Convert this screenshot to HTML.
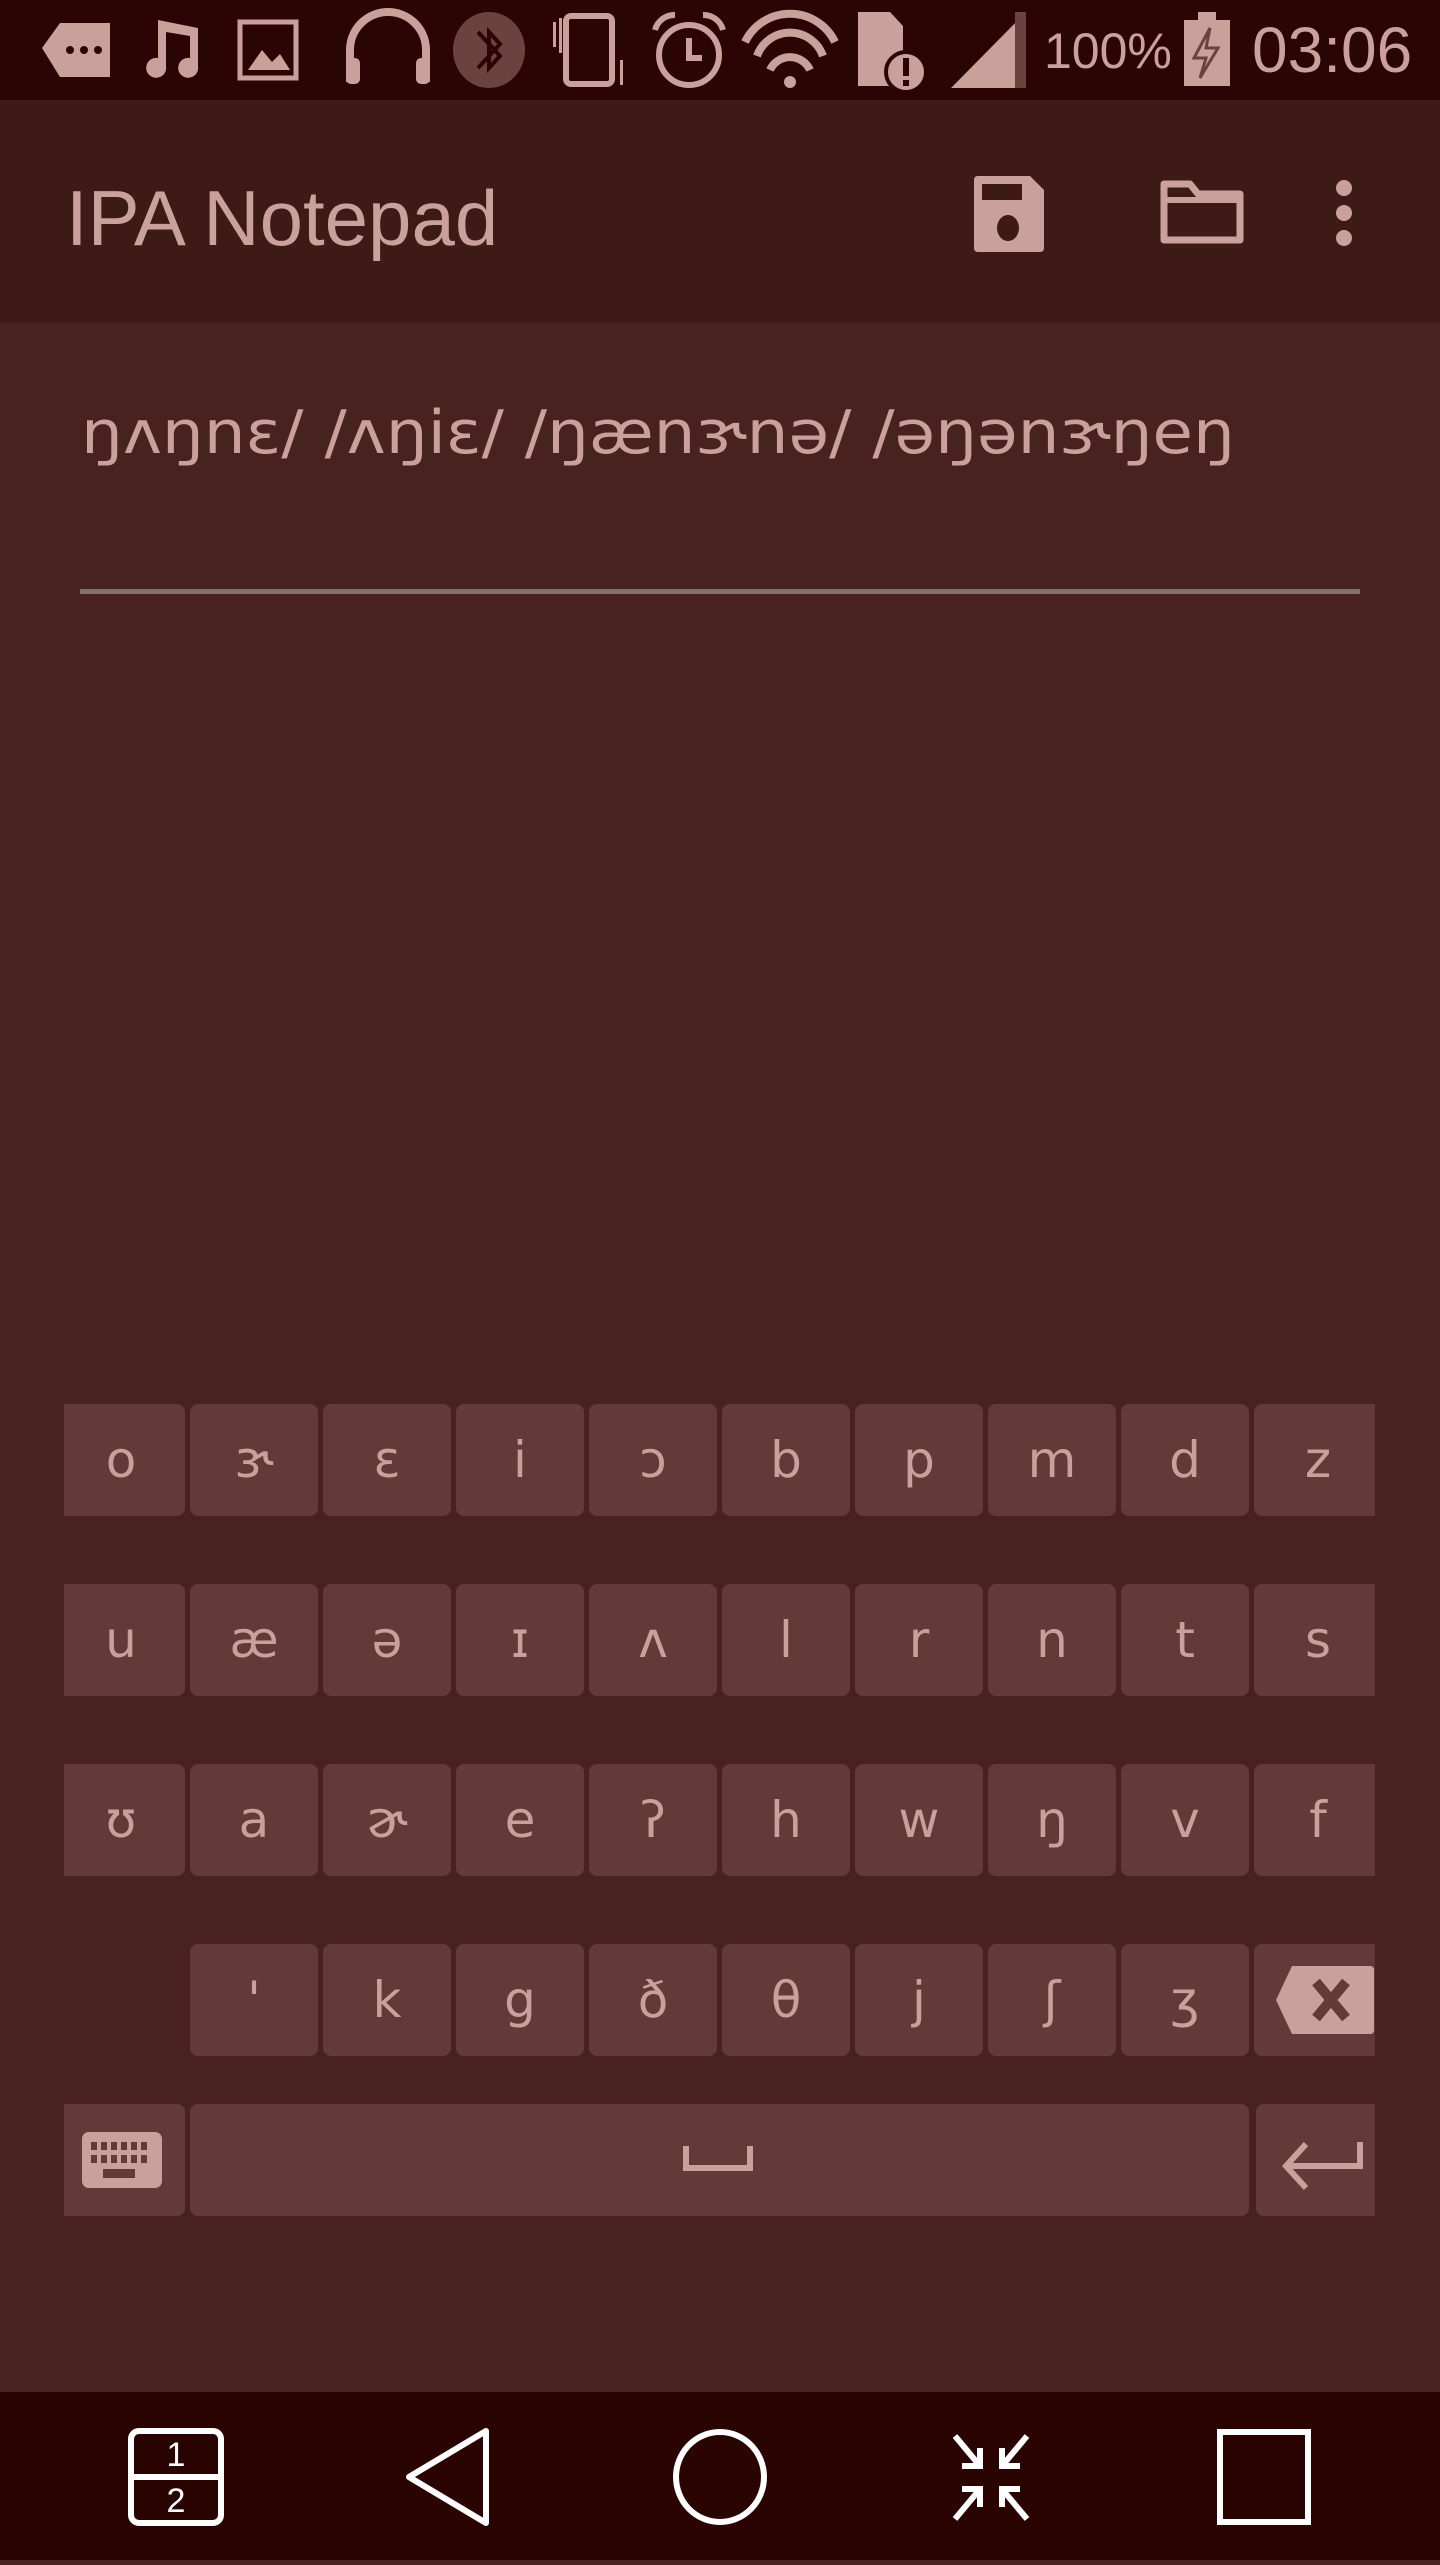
<!DOCTYPE html>
<html><head><meta charset="utf-8"><style>
*{margin:0;padding:0;box-sizing:border-box}
body{width:1440px;height:2560px;background:#48221e;font-family:"Liberation Sans","DejaVu Sans",sans-serif;position:relative;overflow:hidden;color:#c9a09a}
#sb{position:absolute;left:0;top:0;width:1440px;height:100px;background:#2a0503}
#ab{position:absolute;left:0;top:100px;width:1440px;height:223px;background:#3e1a16}
#title{position:absolute;left:66px;top:168px;font-size:78px;line-height:100px;color:#c9a09a}
#txt{position:absolute;left:81px;top:393px;font-size:60px;line-height:80px;white-space:nowrap;font-family:"DejaVu Sans","Liberation Sans",sans-serif;transform:scaleX(1.1);transform-origin:left}
#line{position:absolute;left:80px;top:589px;width:1280px;height:5px;background:#85706a}
#kb{position:absolute;left:64px;top:1404px;width:1311px;height:812px;overflow:hidden}
.k{position:absolute;width:128px;height:112px;background:#633a37;border-radius:8px;text-align:center;font-size:50px;line-height:112px;color:#c9a09a;font-family:"DejaVu Sans","Liberation Sans",sans-serif}
#nav{position:absolute;left:0;top:2392px;width:1440px;height:168px;background:#2a0400}
</style></head><body>
<div id="sb">
<svg width="1440" height="100" viewBox="0 0 1440 100" fill="#c9a09a">
<path d="M42 48 L60 23 L110 23 L110 77 L60 77 Z"/>
<circle cx="70" cy="50" r="4" fill="#2a0503"/><circle cx="84" cy="50" r="4" fill="#2a0503"/><circle cx="98" cy="50" r="4" fill="#2a0503"/>
<path d="M158 20 L198 28 L198 66 A10 10 0 1 1 190 58 L190 36 L166 32 L166 66 A10 10 0 1 1 158 58 Z"/>
<rect x="240" y="22" width="56" height="56" fill="none" stroke="#c9a09a" stroke-width="5"/>
<path d="M248 70 L262 50 L272 62 L280 54 L290 70 Z"/>
<path d="M350 82 L350 50 A38 38 0 0 1 426 50 L426 82" fill="none" stroke="#c9a09a" stroke-width="8"/>
<rect x="346" y="58" width="14" height="26" rx="5"/><rect x="416" y="58" width="14" height="26" rx="5"/>
<ellipse cx="489" cy="50" rx="36" ry="38" fill="#6b433e"/>
<path d="M478 32 L500 56 L489 68 L489 32 L500 44 L478 68" fill="none" stroke="#2a0503" stroke-width="4"/>
<rect x="566" y="16" width="46" height="68" rx="5" fill="none" stroke="#c9a09a" stroke-width="6"/>
<rect x="553" y="22" width="3" height="25"/><rect x="559" y="18" width="3" height="35"/><rect x="620" y="60" width="3" height="25"/>
<circle cx="689" cy="55" r="30" fill="none" stroke="#c9a09a" stroke-width="6"/>
<path d="M689 38 L689 58 L702 58" fill="none" stroke="#c9a09a" stroke-width="6"/>
<path d="M655 30 A20 20 0 0 1 675 15 M723 30 A20 20 0 0 0 703 15" fill="none" stroke="#c9a09a" stroke-width="6"/>
<path d="M745 42 A50 50 0 0 1 835 42" fill="none" stroke="#c9a09a" stroke-width="8"/>
<path d="M757 56 A35 35 0 0 1 823 56" fill="none" stroke="#c9a09a" stroke-width="8"/>
<path d="M770 70 A22 22 0 0 1 810 70" fill="none" stroke="#c9a09a" stroke-width="8"/>
<circle cx="790" cy="82" r="6"/>
<path d="M858 12 L890 12 L903 26 L903 86 L858 86 Z"/>
<circle cx="906" cy="72" r="20" fill="#c9a09a" stroke="#2a0503" stroke-width="4"/>
<rect x="903" y="58" width="6" height="18" fill="#2a0503"/><rect x="903" y="80" width="6" height="6" fill="#2a0503"/>
<path d="M951 88 L1026 12 L1026 88 Z"/>
<rect x="1015" y="12" width="11" height="76" fill="#6b433e"/>
<rect x="1184" y="20" width="46" height="66"/><rect x="1198" y="12" width="18" height="10"/>
<path d="M1210 28 L1194 58 L1206 58 L1200 78 L1218 48 L1206 48 Z" fill="none" stroke="#6b433e" stroke-width="3"/>
<text x="1044" y="68" font-size="50" font-family="Liberation Sans">100%</text>
<text x="1252" y="72" font-size="64" font-family="Liberation Sans">03:06</text>
</svg>
</div>
<div id="ab">
<svg style="position:absolute;left:0;top:0" width="1440" height="223" viewBox="0 100 1440 223" fill="#c9a09a">
<path d="M978 176 L1030 176 L1044 190 L1044 248 Q1044 252 1040 252 L978 252 Q974 252 974 248 L974 180 Q974 176 978 176 Z"/>
<rect x="982" y="184" width="40" height="16" fill="#3e1a16"/>
<ellipse cx="1008" cy="228" rx="11" ry="13" fill="#3e1a16"/>
<path d="M1164 184 L1190 184 L1198 194 L1240 194 L1240 240 L1164 240 Z" fill="none" stroke="#c9a09a" stroke-width="7" stroke-linejoin="round"/>
<path d="M1164 200 L1240 200" stroke="#c9a09a" stroke-width="6"/>
<circle cx="1344" cy="188" r="8"/><circle cx="1344" cy="213" r="8"/><circle cx="1344" cy="238" r="8"/>
</svg>
<div id="title" style="top:68px">IPA Notepad</div>
</div>
<div id="txt">ŋʌŋnɛ/ /ʌŋiɛ/ /ŋænɝnə/ /əŋənɝŋeŋ</div>
<div id="line"></div>
<div id="kb">
<div class="k" style="left:-7px;top:0">o</div><div class="k" style="left:126px;top:0">ɝ</div><div class="k" style="left:259px;top:0">ɛ</div><div class="k" style="left:392px;top:0">i</div><div class="k" style="left:525px;top:0">ɔ</div><div class="k" style="left:658px;top:0">b</div><div class="k" style="left:791px;top:0">p</div><div class="k" style="left:924px;top:0">m</div><div class="k" style="left:1057px;top:0">d</div><div class="k" style="left:1190px;top:0">z</div>
<div class="k" style="left:-7px;top:180px">u</div><div class="k" style="left:126px;top:180px">æ</div><div class="k" style="left:259px;top:180px">ə</div><div class="k" style="left:392px;top:180px">ɪ</div><div class="k" style="left:525px;top:180px">ʌ</div><div class="k" style="left:658px;top:180px">l</div><div class="k" style="left:791px;top:180px">r</div><div class="k" style="left:924px;top:180px">n</div><div class="k" style="left:1057px;top:180px">t</div><div class="k" style="left:1190px;top:180px">s</div>
<div class="k" style="left:-7px;top:360px">ʊ</div><div class="k" style="left:126px;top:360px">a</div><div class="k" style="left:259px;top:360px">ɚ</div><div class="k" style="left:392px;top:360px">e</div><div class="k" style="left:525px;top:360px">ʔ</div><div class="k" style="left:658px;top:360px">h</div><div class="k" style="left:791px;top:360px">w</div><div class="k" style="left:924px;top:360px">ŋ</div><div class="k" style="left:1057px;top:360px">v</div><div class="k" style="left:1190px;top:360px">f</div>
<div class="k" style="left:126px;top:540px">'</div><div class="k" style="left:259px;top:540px">k</div><div class="k" style="left:392px;top:540px">g</div><div class="k" style="left:525px;top:540px">ð</div><div class="k" style="left:658px;top:540px">θ</div><div class="k" style="left:791px;top:540px">j</div><div class="k" style="left:924px;top:540px">ʃ</div><div class="k" style="left:1057px;top:540px">ʒ</div>
<div class="k" style="left:1190px;top:540px"><svg width="128" height="112" viewBox="0 0 128 112"><path d="M22 56 L38 22 L116 22 Q120 22 120 26 L120 86 Q120 90 116 90 L38 90 Z" fill="#c9a09a"/><path d="M62 38 L92 74 M92 38 L62 74" stroke="#633a37" stroke-width="10"/></svg></div>
<div class="k" style="left:-7px;top:700px;width:128px"><svg width="128" height="112" viewBox="0 0 128 112"><rect x="25" y="28" width="80" height="56" rx="7" fill="#c9a09a"/><g fill="#633a37"><rect x="34" y="38" width="6" height="8"/><rect x="44" y="38" width="6" height="8"/><rect x="54" y="38" width="6" height="8"/><rect x="64" y="38" width="6" height="8"/><rect x="74" y="38" width="6" height="8"/><rect x="84" y="38" width="6" height="8"/><rect x="34" y="51" width="6" height="8"/><rect x="44" y="51" width="6" height="8"/><rect x="54" y="51" width="6" height="8"/><rect x="64" y="51" width="6" height="8"/><rect x="74" y="51" width="6" height="8"/><rect x="84" y="51" width="6" height="8"/><rect x="46" y="65" width="32" height="9"/></g></svg></div>
<div class="k" style="left:126px;top:700px;width:1059px"><svg width="1059" height="112" viewBox="0 0 1059 112"><path d="M496 42 L496 64 L560 64 L560 42" fill="none" stroke="#c9a09a" stroke-width="6"/></svg></div>
<div class="k" style="left:1192px;top:700px"><svg width="128" height="112" viewBox="0 0 128 112"><path d="M104 38 L104 62 L32 62 M50 40 L30 62 L50 84" fill="none" stroke="#c9a09a" stroke-width="6"/></svg></div>
</div>
<div id="nav">
<svg width="1440" height="168" viewBox="0 2392 1440 168" fill="none" stroke="#fff" stroke-width="6">
<rect x="131" y="2431" width="90" height="92" rx="8"/>
<path d="M131 2477 L221 2477"/>
<text x="176" y="2466" font-size="34" fill="#fff" stroke="none" text-anchor="middle" font-family="Liberation Sans">1</text>
<text x="176" y="2512" font-size="34" fill="#fff" stroke="none" text-anchor="middle" font-family="Liberation Sans">2</text>
<path d="M486 2431 L486 2523 L409 2477 Z" stroke-linejoin="round"/>
<ellipse cx="720" cy="2477" rx="44" ry="45"/>
<path d="M955 2436 L980 2466 M980 2448 L980 2466 L962 2466" />
<path d="M1027 2436 L1002 2466 M1002 2448 L1002 2466 L1020 2466"/>
<path d="M955 2519 L980 2489 M980 2507 L980 2489 L962 2489"/>
<path d="M1027 2519 L1002 2489 M1002 2507 L1002 2489 L1020 2489"/>
<rect x="1220" y="2432" width="88" height="90"/>
</svg>
</div>
</body></html>
